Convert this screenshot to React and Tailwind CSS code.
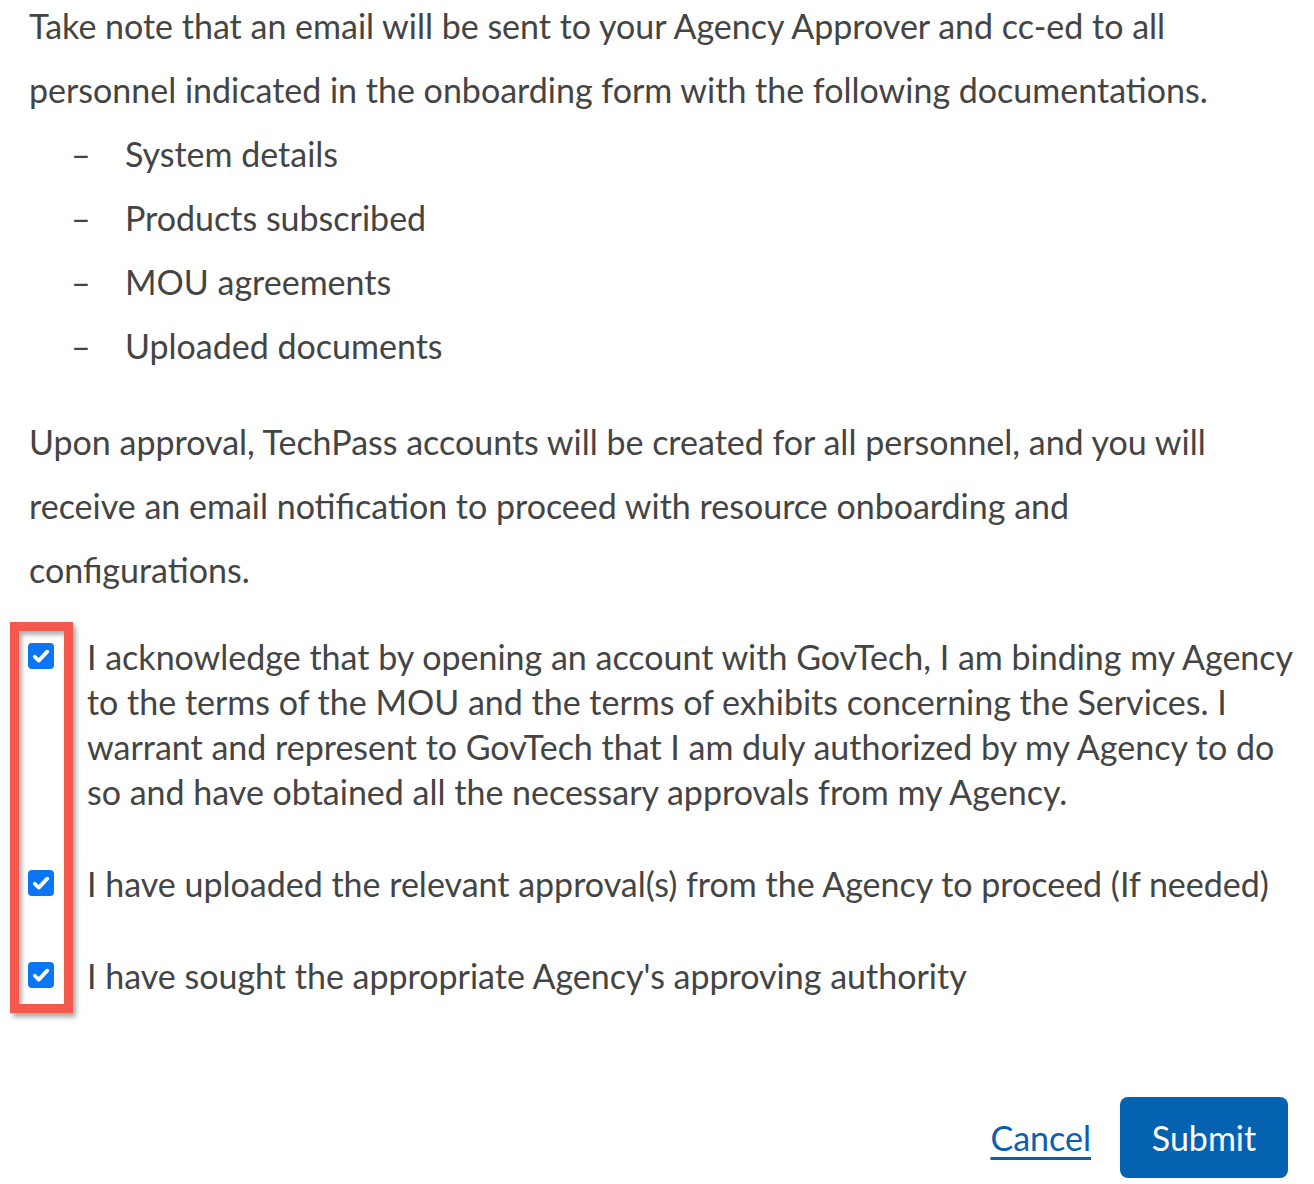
import React from "react";

const Check = () => (
    <span className="flex h-[26px] w-[26px] shrink-0 items-center justify-center rounded-[4px] bg-[#0a75f5]">
        <svg viewBox="0 0 16 16" className="h-[20px] w-[20px]" fill="none">
            <path d="M3 8.6l3.2 3.1 6.8-7.2" stroke="white" strokeWidth="3" strokeLinecap="round" strokeLinejoin="round" />
        </svg>
    </span>
);

const App = () => {
    const docs = ["System details", "Products subscribed", "MOU agreements", "Uploaded documents"];

    return (
        <div
            className="relative h-[1184px] w-[1314px] overflow-hidden bg-white text-[#444444]"
            style={{ fontFamily: "Lato, 'Noto Sans', sans-serif" }}
        >
            <div className="-mt-[6px] pl-[29px] text-[34px] leading-[64px]">
                <p>
                    Take note that an email will be sent to your Agency Approver and cc-ed to all
                    <br />
                    personnel indicated in the onboarding form with the following documentations.
                </p>
                <ul>
                    {docs.map((d) => (
                        <li key={d} className="flex">
                            <span className="w-[96px] pl-[42px]">–</span>
                            <span>{d}</span>
                        </li>
                    ))}
                </ul>
                <p className="mt-[32px]">
                    Upon approval, TechPass accounts will be created for all personnel, and you will
                    <br />
                    receive an email notification to proceed with resource onboarding and
                    <br />
                    configurations.
                </p>
            </div>

            <div className="mt-[32px] flex flex-col gap-[47px] pl-[28px] text-[34px] leading-[45px]">
                <div className="flex gap-[33px]">
                    <div className="pt-[9px]"><Check /></div>
                    <p>
                        I acknowledge that by opening an account with GovTech, I am binding my Agency
                        <br />
                        to the terms of the MOU and the terms of exhibits concerning the Services. I
                        <br />
                        warrant and represent to GovTech that I am duly authorized by my Agency to do
                        <br />
                        so and have obtained all the necessary approvals from my Agency.
                    </p>
                </div>
                <div className="flex gap-[33px]">
                    <div className="pt-[9px]"><Check /></div>
                    <p>I have uploaded the relevant approval(s) from the Agency to proceed (If needed)</p>
                </div>
                <div className="flex gap-[33px]">
                    <div className="pt-[9px]"><Check /></div>
                    <p>I have sought the appropriate Agency's approving authority</p>
                </div>
            </div>

            <div className="mt-[99px] flex items-center justify-end gap-[29px] pr-[26px] text-[34px]">
                <a href="#" className="text-[#0a5fb0] underline underline-offset-[6px]">Cancel</a>
                <button className="h-[81px] w-[168px] rounded-[8px] bg-[#0562b0] text-white">Submit</button>
            </div>

            <div className="pointer-events-none absolute left-[10px] top-[622px] h-[391px] w-[63px] border-[9px] border-[#f4594d] shadow-[3px_4px_5px_rgba(0,0,0,0.35),inset_3px_4px_4px_rgba(0,0,0,0.3)]" />
        </div>
    );
};

export default App;
